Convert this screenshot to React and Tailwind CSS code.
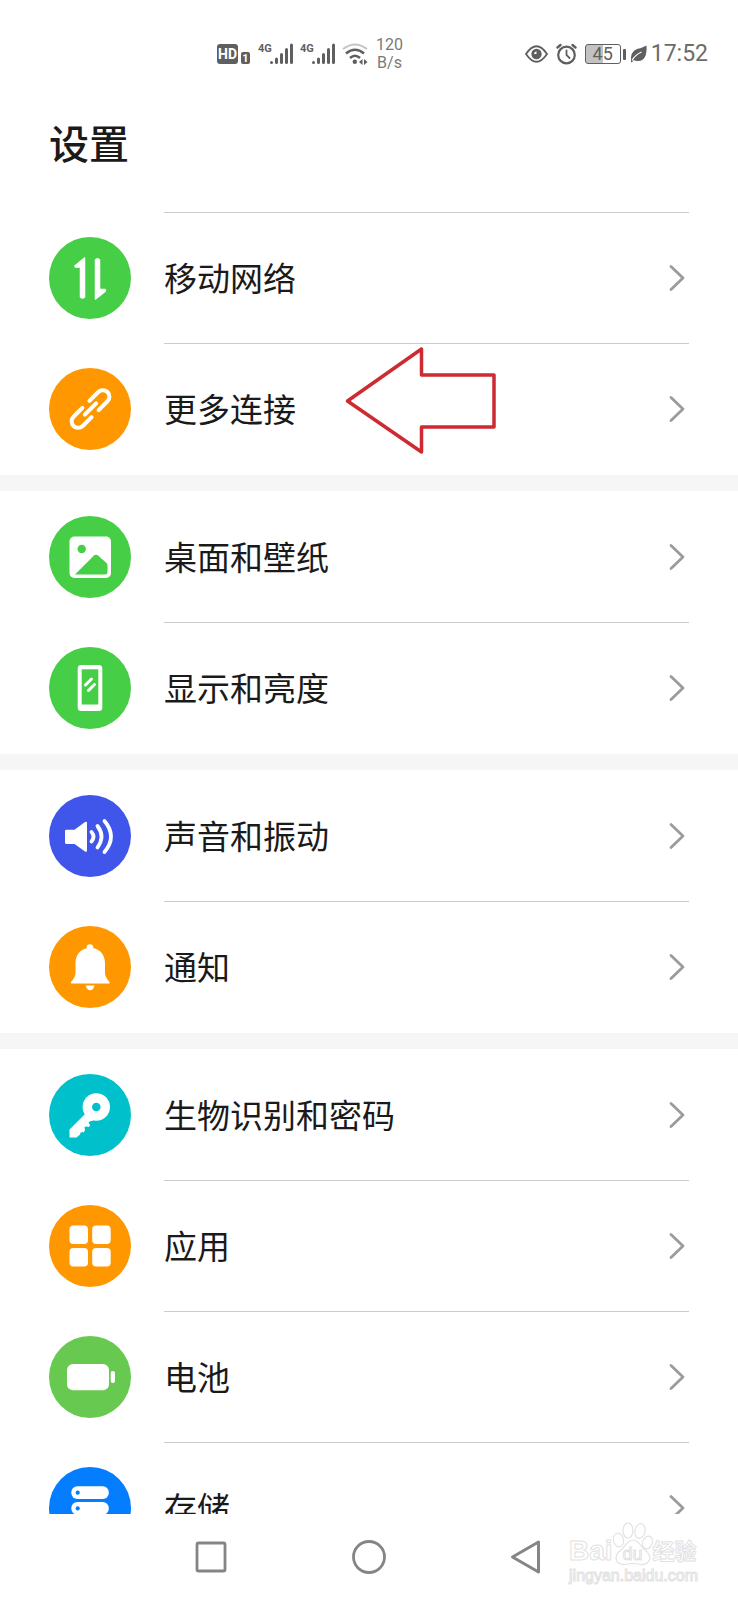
import React from 'react';

const MobileIcon = () => (
  <g fill="white" stroke="white" strokeWidth="1.5" strokeLinejoin="round">
    <path d="M35.500 21V60Q33.500 62 31.500 60V30H26.500Q25.500 29 26.500 28.500Z" />
    <path d="M46.500 62V23Q48.500 20.500 50.500 23V52.500H56Q57 53.500 56 54.500Z" />
  </g>
);

const LinkIcon = () => (
  <g
    transform="translate(41.500 41) rotate(-45)"
    fill="none"
    stroke="white"
    strokeWidth="4"
    strokeLinecap="round"
  >
    <path d="M5 -6.500H17.500A6.500 6.500 0 0 1 17.500 6.500H5" />
    <path d="M-5 6.500H-17.500A6.500 6.500 0 0 1 -17.500 -6.500H-5" />
    <path d="M-8 0H8" />
  </g>
);

const WallpaperIcon = ({ color }) => (
  <>
    <rect x="20.500" y="20.500" width="41.500" height="41.500" rx="5" fill="white" />
    <circle cx="32.700" cy="33" r="4.200" fill={color} />
    <path d="M26 58.500L45 39.500Q47 38 49 39.500L57.500 47Q58.500 48 58.500 49.500V56Q58.500 58.500 56 58.500Z" fill={color} />
  </>
);

const DisplayIcon = ({ color }) => (
  <>
    <rect x="28.700" y="18" width="24.600" height="46" rx="3.500" fill="white" />
    <rect x="32.700" y="22.300" width="16.600" height="35.200" fill={color} />
    <path d="M36.500 38L42.500 32M39.500 43.500L45.500 37.500" stroke="white" strokeWidth="3" strokeLinecap="round" />
  </>
);

const SoundIcon = () => (
  <>
    <path d="M17.500 34.700H25.500L36 27Q38 26 38 28V55.500Q38 57.500 36 56.500L25.500 49H17.500Q16 49 16 47.500V36Q16 34.700 17.500 34.700Z" fill="white" />
    <g fill="none" stroke="white" strokeWidth="3.800" strokeLinecap="round">
      <path d="M42.500 37Q46.500 41.500 42.500 46.500" />
      <path d="M48.500 31Q56.500 41.500 48.500 52.500" />
      <path d="M55.500 26Q68.500 41.500 55.500 57" />
    </g>
  </>
);

const BellIcon = () => (
  <g fill="white">
    <circle cx="41" cy="21.500" r="3.300" />
    <path d="M26.500 37C26.500 16.500 56 16.500 56 37V47Q56 51 60.500 56Q61 57.500 60 57.500H22.500Q21.500 57.500 22 56Q26.500 51 26.500 47Z" />
    <path d="M36.800 59.500H45.500Q44.500 64.200 41 64.200Q37.800 64.200 36.800 59.500Z" />
  </g>
);

const KeyIcon = ({ color }) => (
  <>
    <circle cx="47.300" cy="33" r="13.700" fill="white" />
    <path d="M35.500 40.500L20.500 55.500V63.500H27.500L31 60.500Q31.500 57 34.500 58.500L36 56.500L35.500 53Q37.500 52 40 53L41 51L39.500 48.500Q40.500 46.500 43.500 47L45 44Z" fill="white" />
    <circle cx="47.300" cy="33" r="4.300" fill={color} />
  </>
);

const AppsIcon = () => (
  <g fill="white">
    <rect x="20.500" y="20.500" width="18.500" height="18.500" rx="4" />
    <rect x="43.200" y="20.500" width="18.500" height="18.500" rx="4" />
    <rect x="20.500" y="43" width="18.500" height="18.500" rx="4" />
    <rect x="43.200" y="43" width="18.500" height="18.500" rx="4" />
  </g>
);

const BatteryIcon = () => (
  <g fill="white">
    <rect x="18" y="28" width="42" height="26.300" rx="6" />
    <rect x="61.700" y="35" width="4.300" height="12" rx="2" />
  </g>
);

const StorageIcon = ({ color }) => (
  <>
    {[19.3, 35, 50.7].map((y) => (
      <g key={y}>
        <rect x="22.300" y={y} width="37.500" height="12.700" rx="6" fill="white" />
        <circle cx="28.700" cy={y + 6.4} r="2.100" fill={color} />
      </g>
    ))}
  </>
);

const groups = [
  {
    id: 'network',
    topLine: true,
    items: [
      { label: '移动网络', color: '#47ce47', Icon: MobileIcon },
      { label: '更多连接', color: '#ff9800', Icon: LinkIcon, marked: true },
    ],
  },
  {
    id: 'screen',
    items: [
      { label: '桌面和壁纸', color: '#47ce47', Icon: WallpaperIcon },
      { label: '显示和亮度', color: '#47ce47', Icon: DisplayIcon },
    ],
  },
  {
    id: 'sound',
    items: [
      { label: '声音和振动', color: '#4056ea', Icon: SoundIcon },
      { label: '通知', color: '#ff9800', Icon: BellIcon },
    ],
  },
  {
    id: 'system',
    items: [
      { label: '生物识别和密码', color: '#00c1cb', Icon: KeyIcon },
      { label: '应用', color: '#ff9800', Icon: AppsIcon },
      { label: '电池', color: '#67c94f', Icon: BatteryIcon },
      { label: '存储', color: '#057dff', Icon: StorageIcon },
    ],
  },
];

const Signal = () => (
  <div className="flex items-start">
    <span className="w-3 text-[11px] leading-3 font-bold">4G</span>
    <svg width="24" height="22" viewBox="0 0 24 22" stroke="currentColor" strokeWidth="3" strokeLinecap="round">
      <path d="M1.500 19.500V19.600M6.500 19.500V16M11.500 19.500V11.500M16.500 19.500V6.500M21.500 19.500V2" />
    </svg>
  </div>
);

const StatusBar = () => (
  <div className="flex items-center justify-between h-[108px] pl-[217px] pr-[30px] text-[#5f5f5f] font-[Roboto,sans-serif]">
    <div className="flex items-center">
      <div className="flex items-end">
        <span className="flex items-center justify-center w-[21px] h-5 rounded-[3px] bg-[#5f5f5f] text-white text-sm leading-none font-bold">HD</span>
        <span className="flex items-center justify-center w-[9px] h-3 ml-[3px] rounded-[2px] bg-[#5f5f5f] text-white text-[11px] leading-none font-bold">1</span>
      </div>
      <div className="flex gap-1.5 ml-2">
        <Signal />
        <Signal />
      </div>
      <svg className="ml-1.5" width="26" height="22" viewBox="0 0 26 22" fill="none" strokeWidth="2.500">
        <path d="M1 6Q13 -3 25 6" stroke="#c4c4c4" strokeWidth="2" />
        <path d="M4 10.500Q13 3 22 10.500M8 15Q13 10.500 18 15" stroke="currentColor" />
        <circle cx="12.800" cy="18.800" r="2.200" fill="currentColor" />
        <path d="M20.500 16V22L17 19ZM22 16V22L25.500 19Z" fill="currentColor" />
      </svg>
      <div className="ml-2 text-base leading-[18px] text-center text-[#7a7a7a]">
        <p>120</p>
        <p>B/s</p>
      </div>
    </div>
    <div className="flex items-center">
      <svg width="23" height="20" viewBox="0 0 23 20" fill="none" stroke="currentColor">
        <path d="M1 10Q11.500 -5.500 22 10Q11.500 25.500 1 10Z" strokeWidth="1.800" />
        <circle cx="11.500" cy="10" r="5.200" fill="currentColor" stroke="none" />
        <path d="M9 10A3 3 0 0 1 11.500 7.200V10Z" fill="white" stroke="none" />
      </svg>
      <svg className="ml-2" width="21" height="22" viewBox="0 0 21 22" fill="none" stroke="currentColor" strokeLinecap="round">
        <circle cx="10.500" cy="12" r="8.300" strokeWidth="2.200" />
        <path d="M10.500 7.500V12L13.500 15" strokeWidth="1.800" />
        <path d="M1.500 4.500L4.500 2M19.500 4.500L16.500 2" strokeWidth="2.400" />
      </svg>
      <div className="flex items-center justify-center w-9 h-5 ml-2 rounded-[3px] border border-current bg-linear-to-r from-[#c2c2c2] from-50% to-white to-50% text-lg leading-none">
        45
      </div>
      <span className="w-[3px] h-[11px] ml-0.5 rounded-[1px] bg-[#5f5f5f]" />
      <svg className="ml-1" width="18" height="18" viewBox="0 0 18 18">
        <path d="M1 17Q0 6.500 7 4Q12 3 16.500 0.500Q17.500 17 7 16Q4 15.500 3.500 15L2 17.500Z" fill="currentColor" />
        <path d="M2 15.500Q5 10 11.500 7" fill="none" stroke="white" strokeWidth="1.100" />
      </svg>
      <span className="ml-[3px] text-[23px] leading-7 text-[#6c6c6c]">17:52</span>
    </div>
  </div>
);

const MarkArrow = () => (
  <svg className="absolute left-[180px] top-0.5" width="153" height="110" viewBox="0 0 153 110" fill="none" aria-hidden="true">
    <path d="M3.500 55L77.500 3V29H150V81H77.500V106Z" stroke="#cd2a31" strokeWidth="3.500" strokeLinejoin="round" />
  </svg>
);

const SettingRow = ({ item, line }) => {
  const { label, color, Icon, marked } = item;
  return (
    <li>
      <button type="button" className="flex items-center w-full gap-[33px] px-[49px] text-left">
        <svg className="shrink-0" width="82" height="82" viewBox="0 0 82 82" aria-hidden="true">
          <circle cx="41" cy="41" r="41" fill={color} />
          <Icon color={color} />
        </svg>
        <span className={`relative flex flex-1 items-center justify-between h-[131px] pr-1 ${line ? 'border-t border-[#cbcbcb]' : ''}`}>
          <span className="pb-0.5 text-[33px] leading-10">{label}</span>
          <svg width="16" height="28" viewBox="0 0 16 28" fill="none" stroke="#9b9b9b" strokeWidth="2.800" strokeLinecap="round" strokeLinejoin="round" aria-hidden="true">
            <path d="M2 2.500L14 14L2 25.500" />
          </svg>
          {marked && <MarkArrow />}
        </span>
      </button>
    </li>
  );
};

const Watermark = () => (
  <div className="absolute right-10 bottom-3.5 text-white font-['Liberation_Sans','Noto_Sans_CJK_SC',sans-serif] [-webkit-text-stroke:1px_#e2e2e2] pointer-events-none">
    <div className="flex items-end">
      <span className="text-[28px] leading-[30px] font-bold">Bai</span>
      <div className="relative w-10 h-11">
        <svg width="40" height="44" viewBox="0 0 40 44" fill="white" stroke="#e2e2e2" strokeWidth="1.200">
          <ellipse cx="5.500" cy="18" rx="5" ry="7" transform="rotate(-15 5.500 18)" />
          <ellipse cx="15" cy="8.500" rx="5" ry="7.500" />
          <ellipse cx="27" cy="9" rx="5" ry="7.500" transform="rotate(12 27 9)" />
          <ellipse cx="34.500" cy="20.500" rx="4.800" ry="6.500" transform="rotate(20 34.500 20.500)" />
          <path d="M20 18C26 18 28 25 32 28C41 35 36 43 28 42.500Q20 40.500 12 42.500C2 43 0 34 8 28C12 25 14 18 20 18Z" />
        </svg>
        <span className="absolute inset-x-0 bottom-0.5 text-center text-lg leading-5">du</span>
      </div>
      <span className="text-[22px] leading-7 font-bold">经验</span>
    </div>
    <p className="text-base leading-5">jingyan.baidu.com</p>
  </div>
);

const NavBar = () => (
  <nav className="relative grid grid-cols-3 place-items-center h-[86px] px-[132px] bg-white shrink-0">
    <button type="button" aria-label="最近任务">
      <svg width="36" height="36" viewBox="0 0 36 36" fill="none" stroke="#858585" strokeWidth="2.800">
        <rect x="4" y="4" width="28" height="28" rx="1.500" />
      </svg>
    </button>
    <button type="button" aria-label="主屏幕">
      <svg width="36" height="36" viewBox="0 0 36 36" fill="none" stroke="#858585" strokeWidth="2.800">
        <circle cx="18" cy="18" r="15.500" />
      </svg>
    </button>
    <button type="button" aria-label="返回">
      <svg width="36" height="36" viewBox="0 0 36 36" fill="none" stroke="#858585" strokeWidth="3" strokeLinejoin="round">
        <path d="M3.500 18L29.500 3V33Z" />
      </svg>
    </button>
    <Watermark />
  </nav>
);

const App = () => {
  return (
    <div className="flex flex-col h-screen bg-white text-[#1a1a1a] font-['Noto_Sans_CJK_SC',sans-serif]">
      <header className="shrink-0 h-[212px]">
        <StatusBar />
        <h1 className="px-[49px] pt-1 text-[40px] leading-[60px] font-medium">设置</h1>
      </header>

      <main className="flex flex-col flex-1 min-h-0 gap-4 overflow-hidden bg-[#f6f6f6]">
        {groups.map((group) => (
          <ul key={group.id} className="shrink-0 pb-px bg-white">
            {group.items.map((item, index) => (
              <SettingRow key={item.label} item={item} line={index > 0 || group.topLine} />
            ))}
          </ul>
        ))}
      </main>

      <NavBar />
    </div>
  );
};

export default App;
